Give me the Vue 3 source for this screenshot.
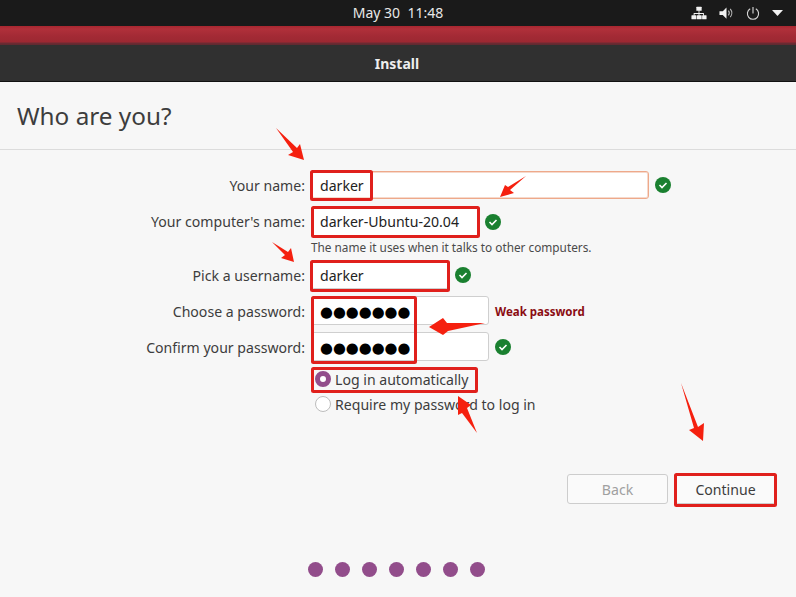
<script setup>
const steps = 7
const arrows = [
  '276,128 297,148 300,144 304,160 288,155 293,152',
  '526,176 510,190 514,193 500,197 505,185 508,187',
  '272,242 288,252 291,248 294,262 281,258 285,255',
  '485,323 447,323 443,318 429,327 443,335 448,331',
  '458,396 471,405 467,408 477,433 462,413 458,415',
  '681,383 698,427 704,423 703,441 689,430 694,428'
]
const boxes = [
  { x: 311.5, y: 171.5, w: 60, h: 28 },
  { x: 312.5, y: 207.5, w: 166, h: 29 },
  { x: 311.5, y: 261.5, w: 137, h: 29 },
  { x: 312.5, y: 297.5, w: 103, h: 65 },
  { x: 312.5, y: 368.5, w: 164, h: 23 },
  { x: 675.5, y: 474.5, w: 100, h: 31 }
]
</script>

<template>
  <div class="screen">
    <div class="topbar">
      <span class="clock">May 30&nbsp;&nbsp;11:48</span>
      <div class="tray">
        <svg class="ico" width="16" height="16" viewBox="0 0 18 16" fill="#f2f2f2">
          <rect x="6" y="1" width="6" height="4.5" rx=".6" />
          <rect x="0.5" y="10.500" width="5.500" height="4.500" rx=".6" />
          <rect x="12.500" y="10.500" width="5" height="4.500" rx=".6" />
          <rect x="6.500" y="10.500" width="5.500" height="4.500" rx=".6" />
          <path d="M8.500 5h1v3h5v3h-1V9H9.500v2h-1V9H4v2H3V8h5.500z" />
        </svg>
        <svg class="ico" width="15" height="16" viewBox="0 0 16 16" fill="none">
          <path d="M0.500 6H4l4-4v12l-4-4H0.500z" fill="#f2f2f2" />
          <path d="M10 5.500a4 4 0 0 1 0 5M12 3.500a7 7 0 0 1 0 9" stroke="#b9b9b9" stroke-width="1.200" />
        </svg>
        <svg class="ico" width="14" height="15" viewBox="0 0 15 15" fill="none" stroke="#d5d5d5" stroke-width="1.200">
          <path d="M4.500 2.500a6 6 0 1 0 6 0M7.500 0.500v7" />
        </svg>
        <svg class="ico" width="11" height="6" viewBox="0 0 11 6"><path d="M0 0h11L5.500 6z" fill="#f2f2f2" /></svg>
      </div>
    </div>
    <div class="redstrip"></div>
    <div class="titlebar">Install</div>

    <main class="page">
      <h1 class="heading">Who are you?</h1>
      <div class="form">
        <div class="row r-name">
          <label>Your name:</label>
          <div class="field w-name focus">darker</div>
          <svg class="check" viewBox="0 0 16 16"><circle cx="8" cy="8" r="8" /><path d="M4.500 8l2.500 2.500 4.500-4.500" /></svg>
        </div>
        <div class="row r-comp">
          <label>Your computer's name:</label>
          <div class="field w-comp">darker-Ubuntu-20.04</div>
          <svg class="check" viewBox="0 0 16 16"><circle cx="8" cy="8" r="8" /><path d="M4.500 8l2.500 2.500 4.500-4.500" /></svg>
        </div>
        <div class="hint">The name it uses when it talks to other computers.</div>
        <div class="row r-user">
          <label>Pick a username:</label>
          <div class="field w-user">darker</div>
          <svg class="check" viewBox="0 0 16 16"><circle cx="8" cy="8" r="8" /><path d="M4.500 8l2.500 2.500 4.500-4.500" /></svg>
        </div>
        <div class="row r-pass">
          <label class="low">Choose a password:</label>
          <div class="field w-pass dots">●●●●●●●</div>
          <span class="weak">Weak password</span>
        </div>
        <div class="row r-conf">
          <label class="low">Confirm your password:</label>
          <div class="field w-pass dots">●●●●●●●</div>
          <svg class="check" viewBox="0 0 16 16"><circle cx="8" cy="8" r="8" /><path d="M4.500 8l2.500 2.500 4.500-4.500" /></svg>
        </div>
        <div class="radio r-auto"><span class="knob on"></span>Log in automatically</div>
        <div class="radio r-req"><span class="knob"></span>Require my password to log in</div>
      </div>
      <div class="actions">
        <button class="btn off">Back</button>
        <button class="btn">Continue</button>
      </div>
      <div class="steps">
        <span v-for="n in steps" :key="n" class="step"></span>
      </div>
    </main>

    <svg class="annot" width="796" height="597" viewBox="0 0 796 597">
      <rect v-for="(b, i) in boxes" :key="i" :x="b.x" :y="b.y" :width="b.w" :height="b.h" fill="none" stroke="#e0201c" stroke-width="3" rx="1" />
      <polygon v-for="(p, i) in arrows" :key="'a' + i" :points="p" fill="#f5200f" />
    </svg>
  </div>
</template>

<style>
html, body { margin: 0; background: #f7f7f7; }
</style>

<style scoped>
.screen {
  position: relative;
  width: 796px;
  height: 597px;
  overflow: hidden;
  display: flex;
  flex-direction: column;
  font-family: "Noto Sans", "Open Sans", sans-serif;
  color: #3d3d3d;
  font-size: 14.1px;
}
.topbar {
  height: 26px;
  flex: none;
  background: #1a1a1a;
  position: relative;
  display: flex;
  align-items: center;
  justify-content: center;
  color: #e8e8e8;
}
.clock { font-size: 14px; line-height: 26px; }
.tray {
  position: absolute;
  right: 13px;
  top: 0;
  height: 26px;
  display: flex;
  align-items: center;
  gap: 12px;
}
.ico { display: block; flex: none; }
.redstrip {
  height: 19px;
  flex: none;
  background: linear-gradient(#a8262f 0, #b0303a 3px, #a32a35 10px, #9c2832 16px, #6e2a33 17px, #5e2a30 19px);
}
.titlebar {
  height: 36px;
  flex: none;
  background: #303030;
  border-bottom: 1px solid #111;
  color: #eeeeee;
  font-weight: 700;
  font-size: 14px;
  text-align: center;
  line-height: 38px;
  padding-right: 2px;
}
.page {
  flex: 1;
  min-height: 0;
  background: #f7f7f7;
  display: flex;
  flex-direction: column;
}
.heading {
  margin: 0;
  height: 68px;
  box-sizing: border-box;
  padding: 1px 0 0 17px;
  border-bottom: 1px solid #dcdcdc;
  font-size: 24.3px;
  font-weight: 400;
  line-height: 66px;
  color: #3d3d3d;
}
.form {
  padding-top: 21px;
  display: flex;
  flex-direction: column;
  height: 301px;
  box-sizing: border-box;
}
.row {
  display: flex;
  align-items: center;
  height: 29px;
}
.row label {
  width: 305px;
  flex: none;
  text-align: right;
  margin-right: 6px;
}
.row label.low { padding-top: 2px; }
.field {
  box-sizing: border-box;
  height: 100%;
  background: #ffffff;
  border: 1px solid #cfcfcf;
  border-radius: 3px;
  padding-left: 8px;
  line-height: 27px;
  color: #222;
  flex: none;
}
.focus { border-color: #eea98a; box-shadow: inset 0 0 0 1px #f6d9cc; }
.w-name { width: 338px; }
.w-comp { width: 168px; }
.w-user { width: 138px; }
.w-pass { width: 178px; }
.dots {
  font-family: "DejaVu Sans", sans-serif;
  font-size: 14.8px;
  line-height: 29px;
  color: #000;
  white-space: nowrap;
}
.check {
  width: 16px;
  height: 16px;
  margin-left: 6px;
  flex: none;
}
.check circle { fill: #1a8030; }
.check path { fill: none; stroke: #fff; stroke-width: 1.600; }
.weak {
  margin-left: 6px;
  margin-top: 2px;
  font-size: 11.5px;
  font-weight: 700;
  color: #8a0c12;
}
.r-name { height: 28px; }
.r-comp { margin-top: 8px; }
.hint {
  margin-left: 311px;
  margin-top: 3px;
  font-size: 11.8px;
  line-height: 16px;
  height: 16px;
  color: #4a4a4a;
}
.r-user { margin-top: 6px; height: 28px; }
.r-pass { margin-top: 7px; }
.r-conf { margin-top: 7px; }
.radio {
  display: flex;
  align-items: center;
  height: 20px;
  margin-left: 315px;
  white-space: nowrap;
}
.r-auto { margin-top: 8px; }
.r-req { margin-top: 5px; }
.knob {
  box-sizing: border-box;
  width: 16px;
  height: 16px;
  border-radius: 50%;
  border: 1px solid #bdbdbd;
  background: #fff;
  margin-right: 4px;
  flex: none;
}
.knob.on {
  border: 5px solid #924d8b;
  background: #fff;
}
.actions {
  display: flex;
  justify-content: flex-end;
  gap: 7px;
  padding-right: 20px;
  margin-top: 23px;
}
.btn {
  box-sizing: border-box;
  width: 101px;
  height: 30px;
  background: #fafafa;
  border: 1px solid #cdcdcd;
  border-radius: 3px;
  font: inherit;
  color: #3d3d3d;
  padding: 0;
}
.btn.off { color: #a0a0a0; }
.steps {
  display: flex;
  justify-content: center;
  gap: 12px;
  margin-top: 58px;
  padding-right: 4px;
}
.step {
  width: 15px;
  height: 15px;
  border-radius: 50%;
  background: #924d8b;
}
.annot {
  position: absolute;
  left: 0;
  top: 0;
  pointer-events: none;
}
</style>
